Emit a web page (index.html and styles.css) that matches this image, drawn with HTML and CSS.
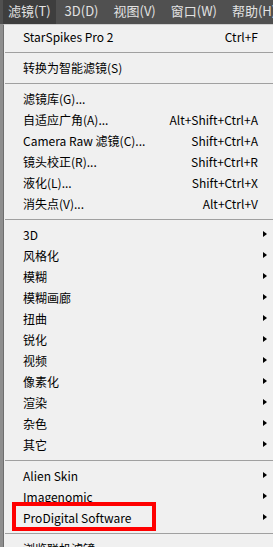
FILE: index.html
```html
<!DOCTYPE html>
<html lang="zh-CN">
<head>
    <meta charset="UTF-8">
    <title>滤镜菜单</title>
    <link rel="stylesheet" href="styles.css">
</head>
<body>
    <div class="menubar">
        <span class="top-item active">滤镜(T)</span>
        <span class="top-item">3D(D)</span>
        <span class="top-item">视图(V)</span>
        <span class="top-item">窗口(W)</span>
        <span class="top-item">帮助(H)</span>
    </div>

    <div class="menu">
        <div class="row"><span class="label">StarSpikes Pro 2</span><span class="key">Ctrl+F</span></div>
        <div class="sep"></div>
        <div class="row"><span class="label">转换为智能滤镜(S)</span></div>
        <div class="sep"></div>
        <div class="row"><span class="label">滤镜库(G)...</span></div>
        <div class="row"><span class="label">自适应广角(A)...</span><span class="key">Alt+Shift+Ctrl+A</span></div>
        <div class="row"><span class="label">Camera Raw 滤镜(C)...</span><span class="key">Shift+Ctrl+A</span></div>
        <div class="row"><span class="label">镜头校正(R)...</span><span class="key">Shift+Ctrl+R</span></div>
        <div class="row"><span class="label">液化(L)...</span><span class="key">Shift+Ctrl+X</span></div>
        <div class="row"><span class="label">消失点(V)...</span><span class="key">Alt+Ctrl+V</span></div>
        <div class="sep"></div>
        <div class="row sub"><span class="label">3D</span></div>
        <div class="row sub"><span class="label">风格化</span></div>
        <div class="row sub"><span class="label">模糊</span></div>
        <div class="row sub"><span class="label">模糊画廊</span></div>
        <div class="row sub"><span class="label">扭曲</span></div>
        <div class="row sub"><span class="label">锐化</span></div>
        <div class="row sub"><span class="label">视频</span></div>
        <div class="row sub"><span class="label">像素化</span></div>
        <div class="row sub"><span class="label">渲染</span></div>
        <div class="row sub"><span class="label">杂色</span></div>
        <div class="row sub"><span class="label">其它</span></div>
        <div class="sep"></div>
        <div class="row sub"><span class="label">Alien Skin</span></div>
        <div class="row sub"><span class="label">Imagenomic</span></div>
        <div class="row sub"><span class="label marked">ProDigital Software</span></div>
        <div class="sep"></div>
        <div class="row"><span class="label">浏览联机滤镜...</span></div>
    </div>
</body>
</html>
```

FILE: styles.css
```css
body {
    margin: 0;
    padding: 0;
    background-color: #8e8e8e;
    font-family: "Noto Sans CJK SC", "Liberation Sans", sans-serif;
    overflow: hidden;
}
.menubar {
    height: 24px;
    background-color: #505050;
    display: flex;
    align-items: stretch;
    padding-left: 3px;
    overflow: hidden;
    white-space: nowrap;
}
.top-item {
    flex-shrink: 0;
    color: #e2e2e2;
    font-size: 13px;
    line-height: 22px;
    padding: 0 6px;
    margin-right: 3px;
}
.top-item.active {
    background-color: #3e3e3e;
    padding: 0 5px;
}
.menu {
    margin-left: 3px;
    border-left: 1px solid #6e6e6e;
    border-top: 1px solid #d0d0d0;
    background-color: #f0f0f0;
    padding-top: 1px;
    height: 600px;
}
.row {
    height: 21px;
    display: flex;
    align-items: center;
    justify-content: space-between;
    padding: 0 15px 0 19px;
    font-size: 12px;
    color: #000;
    position: relative;
}
.label {
    white-space: nowrap;
}
.key {
    white-space: nowrap;
}
/* submenu arrow */
.sub::after {
    content: "";
    position: absolute;
    right: 6px;
    top: 7px;
    border-left: 4px solid #000;
    border-top: 3.5px solid transparent;
    border-bottom: 3.5px solid transparent;
}
.sep {
    height: 10px;
    display: flex;
    align-items: center;
    padding-left: 1px;
}
.sep::before {
    content: "";
    display: block;
    width: 100%;
    height: 1px;
    background-color: #a0a0a0;
}
/* red highlight frame around one item */
.marked {
    position: relative;
}
.marked::before {
    content: "";
    position: absolute;
    left: -11px;
    right: -25px;
    top: -7px;
    bottom: -5px;
    border: 4px solid #ff0000;
}
```
